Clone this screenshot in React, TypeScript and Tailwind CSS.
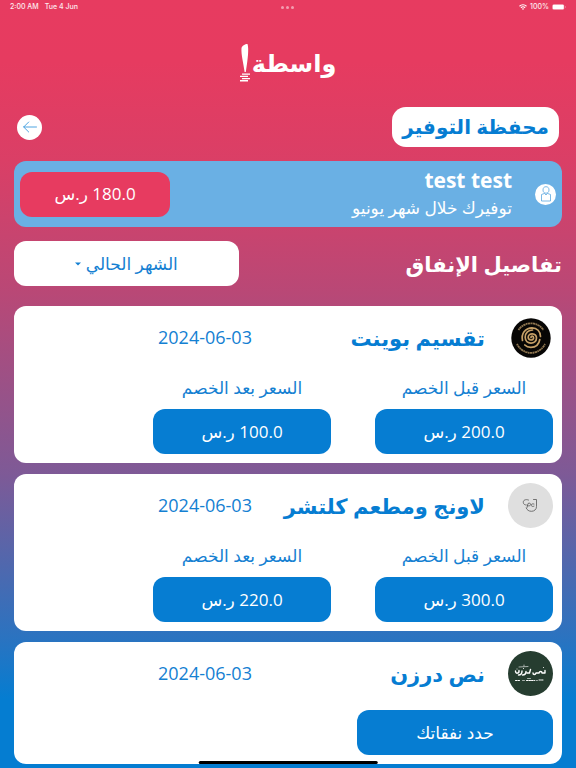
import type { ReactNode } from 'react';

type Purchase = {
  name: string;
  date: string;
  logo: ReactNode;
  before?: string;
  after?: string;
};

function SpiralLogo() {
  return (
    <svg viewBox="0 0 40 40" className="size-10" aria-hidden="true">
      <circle cx="20" cy="20" r="19.7" fill="#070605" />
      <g fill="none" stroke="#c6a067" strokeWidth="1.7" strokeLinecap="round">
        <path d="M20 19.500c0-1.800 2.600-1.800 2.600.4 0 2.800-5.400 3-5.400-.6 0-4.800 8.300-4.800 8.300.8 0 6.800-11.300 6.800-11.300-.8 0-4.500 3.500-7.300 7.300-7.300" />
        <path d="M11.500 22.500c-1.500-6.500 2.500-12.500 9.500-12.700 5 0 8.500 3.700 8.500 8.700M28.800 21.500c-.8 5-4.300 7.800-9 7.800-2.500 0-4.500-.8-6-2.300" />
      </g>
      <g fill="none" stroke="#8f7650" strokeWidth="1.8" strokeDasharray="1.500 .4 2.500 .4">
        <path d="M7.500 12a15 15 0 0 1 25 0" />
        <path d="M6 26a15.500 15.500 0 0 0 28 0" />
      </g>
    </svg>
  );
}

function CultureLogo() {
  return (
    <svg viewBox="0 0 45 45" className="size-[45px]" aria-hidden="true">
      <circle cx="22.5" cy="22.5" r="22.5" fill="#dfdfdf" />
      <g fill="none" stroke="#555" strokeWidth=".8" strokeLinecap="round">
        <path d="M20.500 17c-3-1.200-5.500.3-5.200 2.500.2 1.800 1.500 2.500 3 2.500" />
        <path d="M25.500 16.500h3v7c0 3-2.300 4.800-5 4.800-2.800 0-4.500-1.300-5.300-3.300" />
        <path d="M19 24.500l1-4c2-1 3.300.5 2.300 1.700-.6.7-1.600.8-2.600.6M26 21c-2-.8-3 .5-2.700 1.500s1.500 1.200 2.700.7" />
      </g>
    </svg>
  );
}

function DarzenLogo() {
  return (
    <svg viewBox="0 0 45 45" className="size-[45px]" aria-hidden="true">
      <circle cx="22.5" cy="22.5" r="22.5" fill="#263d30" />
      <g fill="none" stroke="#fff" strokeLinecap="round" strokeLinejoin="round">
        <path strokeWidth="1.4" d="M37 19.500v2.500h-3c0-2-2.500-2-3 0h-3c-.5 2-3 2-3 0M22.500 18.500l-1 3.500h-2.500M18 20.500c0 2-1.500 3.500-3.500 3.500M14 20c0 2.500-1.500 4-3.500 4M11 19.500c.5 3-3.500 4-3.500.5" />
        <path strokeWidth=".9" d="M35.500 16.500v.1M15.500 17.500v.1M9 18v.1" />
        <path strokeWidth=".6" d="M11 16l9-.5M16 14v1M14.500 29.500h2M28 29.500h1.500M19.500 27.500h3" />
        <path strokeWidth="1" strokeDasharray="1.500 1" d="M7.500 29.500h5M18.500 29.500h8M31 29h5" />
      </g>
    </svg>
  );
}

const purchases: Purchase[] = [
  { name: 'تقسيم بوينت', date: '2024-06-03', logo: <SpiralLogo />, before: '200.0', after: '100.0' },
  { name: 'لاونج ومطعم كلتشر', date: '2024-06-03', logo: <CultureLogo />, before: '300.0', after: '220.0' },
  { name: 'نص درزن', date: '2024-06-03', logo: <DarzenLogo /> },
];

function StatusBar() {
  return (
    <div dir="ltr" className="grid grid-cols-3 items-center h-3.5 px-2.5 text-[7px] font-medium font-[Inter,sans-serif] text-white/90">
      <div className="flex gap-1.5">
        <span>2:00 AM</span>
        <span>Tue 4 Jun</span>
      </div>
      <div className="flex justify-center gap-0.5">
        <i className="size-[3px] rounded-full bg-white/50" />
        <i className="size-[3px] rounded-full bg-white/50" />
        <i className="size-[3px] rounded-full bg-white/50" />
      </div>
      <div className="flex items-center justify-end gap-[3px]">
        <svg viewBox="0 0 16 12" className="w-2 h-1.5" fill="none" stroke="white" strokeWidth="2.2" aria-hidden="true">
          <path d="M1 4.500a10 10 0 0 1 14 0M3.800 7.500a6 6 0 0 1 8.400 0" />
          <path d="M8 12L5.800 9.600a3.200 3.200 0 0 1 4.400 0z" fill="white" stroke="none" />
        </svg>
        <span>100%</span>
        <svg viewBox="0 0 28 12" className="w-3.5 h-1.5" aria-hidden="true">
          <rect x=".5" y=".5" width="24" height="11" rx="3" fill="white" fillOpacity=".4" />
          <rect x="1.5" y="1.5" width="22" height="9" rx="2" fill="white" />
          <path d="M26 4v4c2-.5 2-3.500 0-4" fill="white" fillOpacity=".5" />
        </svg>
      </div>
    </div>
  );
}

function Price({ label, value }: { label: string; value: string }) {
  return (
    <div className="flex-1 flex flex-col gap-[7px]">
      <div className="h-7 flex items-center justify-center text-[17px] whitespace-nowrap text-[#1480d2]">{label}</div>
      <div className="h-[45px] flex items-center justify-center rounded-xl bg-[#067dd2] text-white text-[17px]">{value} ر.س</div>
    </div>
  );
}

function PurchaseCard({ name, date, logo, before, after }: Purchase) {
  return (
    <article className="bg-white rounded-xl p-[9px] flex flex-col gap-3.5">
      <div className="flex items-center pl-[135px]">
        <div className="size-[45px] shrink-0 flex items-center justify-center">{logo}</div>
        <h3 className="mr-[23px] text-[21px] leading-7 font-bold whitespace-nowrap text-[#067dd2]">{name}</h3>
        <time className="mr-auto text-[18px] whitespace-nowrap text-[#1480d2]" dateTime={date}>{date}</time>
      </div>
      {before && after ? (
        <div className="flex gap-11 pl-[130px]">
          <Price label="السعر قبل الخصم" value={before} />
          <Price label="السعر بعد الخصم" value={after} />
        </div>
      ) : (
        <button className="h-[45px] w-[37%] rounded-xl bg-[#067dd2] text-white text-[17px]">حدد نفقاتك</button>
      )}
    </article>
  );
}

export default function App() {
  return (
    <div dir="rtl" className="relative min-h-screen overflow-hidden bg-[linear-gradient(#e73b60_0%,#e63b60_8%,#da3f66_21%,#b94876_38%,#7d5a97_62%,#2b73c0_83%,#057dd1_91%)] font-['Open_Sans','DejaVu_Sans',sans-serif]">
      <StatusBar />

      <header>
        <div dir="ltr" className="h-[93px] flex items-center justify-center gap-0.5 pt-1 text-white">
          <svg viewBox="0 0 10 40" className="w-2.5 h-10" fill="white" aria-hidden="true">
            <path d="M1.500 5C2 3 5 1 7.500 1c1.500 5 .5 14-1.700 28H4.600C3.500 20 1 12 1.500 5z" />
            <path d="M2 30.500h8v1.300H2zM0 32.700h8v1.300H0zM2 34.900h8v1.300H2zM0 37.100h8v1.300H0z" />
          </svg>
          <span dir="rtl" className="text-[24px] leading-10 font-bold">واسطة</span>
        </div>
        <div className="flex items-center justify-between px-[17px]">
          <h1 className="h-10 px-2.5 rounded-[14px] bg-white text-[#067dd2] text-[20px] leading-10 font-bold whitespace-nowrap">محفظة التوفير</h1>
          <button aria-label="رجوع" className="size-[25px] rounded-full bg-white flex items-center justify-center">
            <svg viewBox="0 0 14 12" className="w-3.5 h-3" fill="none" stroke="#3a9ade" strokeWidth=".9" strokeLinecap="round" strokeLinejoin="round" aria-hidden="true">
              <path d="M13.500 6H.7M5.700 1L.7 6l5 5" />
            </svg>
          </button>
        </div>
      </header>

      <main className="px-3.5 pt-3.5 pb-1">
        <section className="h-[66px] rounded-xl bg-[#6ab0e4] flex items-center px-1.5 text-white">
          <div className="size-[21px] shrink-0 rounded-full bg-white flex items-center justify-center">
            <svg viewBox="0 0 12 16" className="w-3 h-4" fill="none" stroke="#5aa7df" strokeWidth=".8" strokeLinejoin="round" aria-hidden="true">
              <path d="M3 4c0-2 1-3.300 3-3.300S9 2 9 4 7.800 7.200 6 7.200 3 6 3 4z" />
              <path d="M4.300 7.200L6 9l1.700-1.800M4.300 7.500L1.500 8.500v6.500h9V8.500L7.700 7.500" />
            </svg>
          </div>
          <div className="mr-[23px]">
            <h2 className="text-[21px] leading-7 font-bold">test test</h2>
            <p className="text-[17px] leading-7 whitespace-nowrap">توفيرك خلال شهر يونيو</p>
          </div>
          <div className="mr-auto w-[28%] h-[45px] rounded-xl bg-[#e73b60] flex items-center justify-center text-[17px]">180.0 ر.س</div>
        </section>

        <div className="mt-3.5 flex items-center justify-between">
          <h2 className="text-[21px] leading-7 font-bold whitespace-nowrap text-white">تفاصيل الإنفاق</h2>
          <div className="w-[41%] h-[45px] rounded-xl bg-white flex items-center justify-center gap-1 text-[#1480d2]">
            <select aria-label="الشهر" className="appearance-none bg-transparent text-[17px] outline-none">
              <option>الشهر الحالي</option>
            </select>
            <svg viewBox="0 0 6 4" className="w-1.5 h-1" fill="#1480d2" aria-hidden="true">
              <path d="M0 .5h6L3 3.500z" />
            </svg>
          </div>
        </div>

        <div className="mt-5 flex flex-col gap-[11px]">
          {purchases.map(p => <PurchaseCard key={p.name} {...p} />)}
        </div>
      </main>

      <div className="absolute bottom-1 left-1/2 -translate-x-1/2 w-[31%] h-[3px] rounded-full bg-black" />
    </div>
  );
}
